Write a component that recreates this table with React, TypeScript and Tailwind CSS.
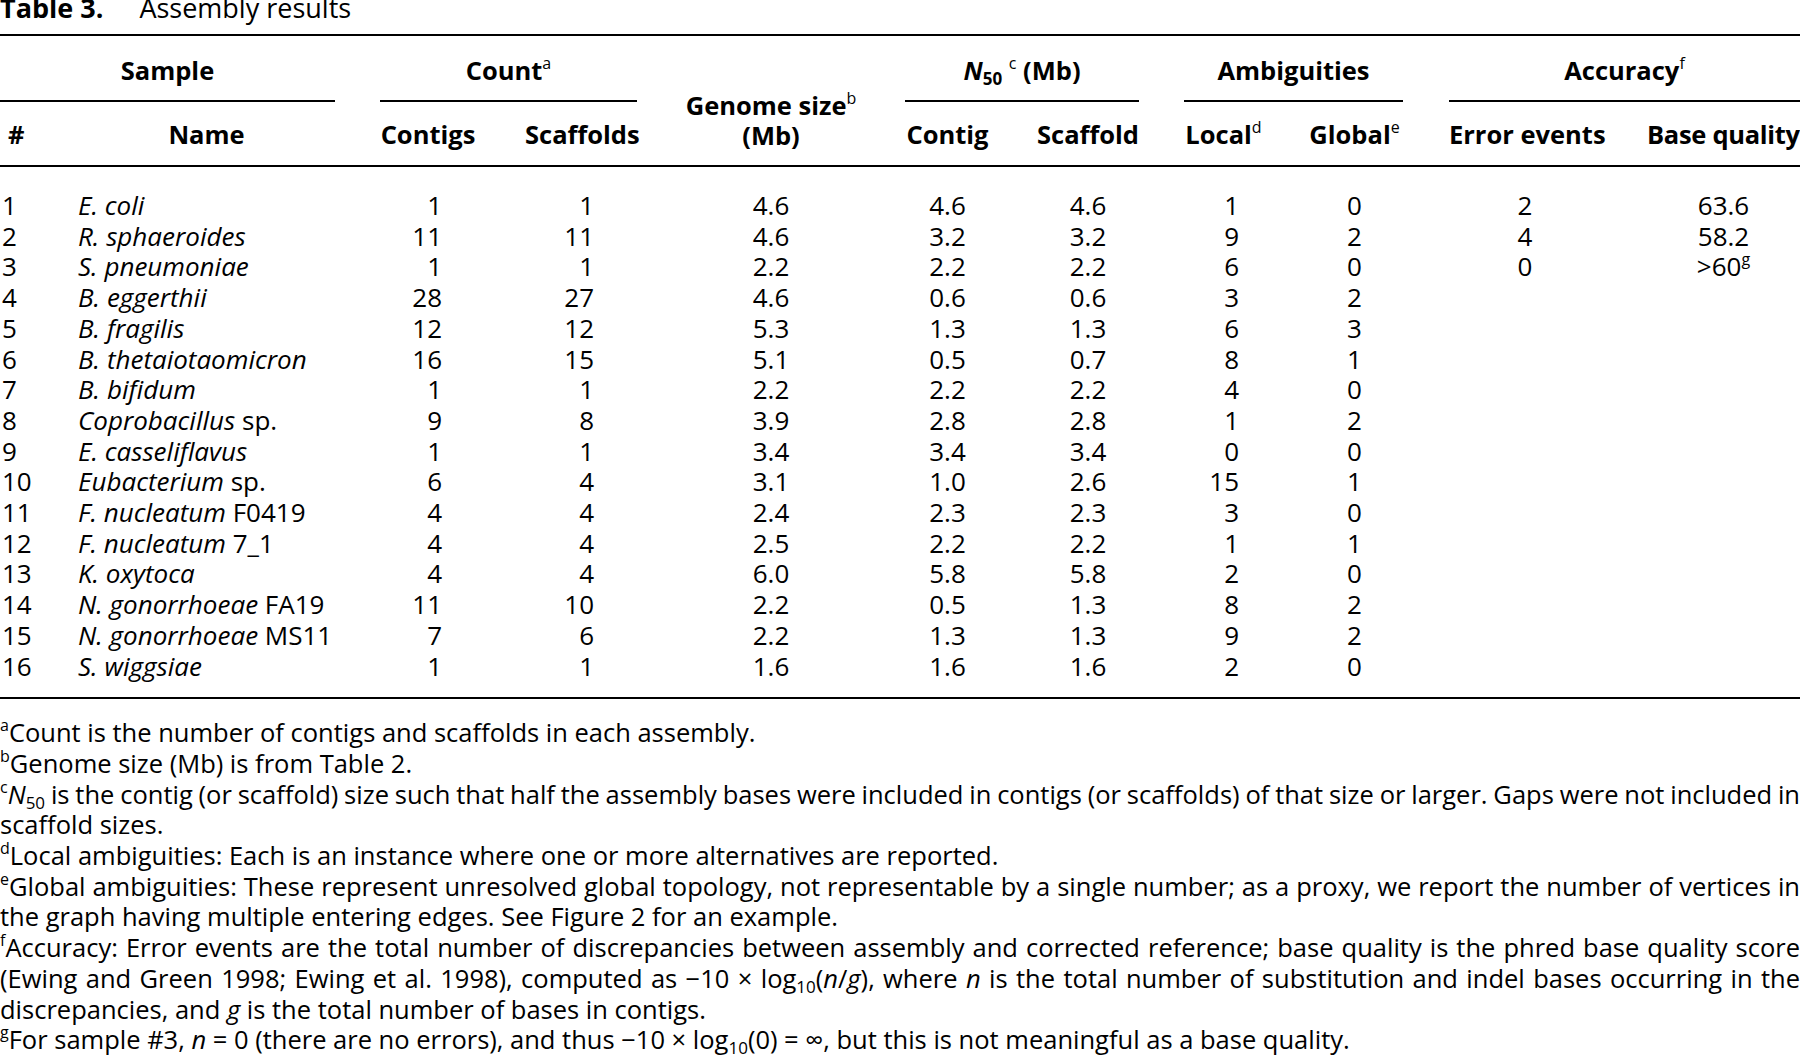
import type { ReactNode } from "react";

// 18 columns: data columns with spacer columns between the header groups
const GRID =
  "grid grid-cols-[78px_257px_45px_96px_49px_112px_268px_85px_47px_102px_45px_79px_43px_97px_46px_152px_46px_153px]";

type Row = {
  n: number;
  italic: string;
  roman?: string;
  contigs: string;
  scaffolds: string;
  genome: string;
  n50Contig: string;
  n50Scaffold: string;
  local: string;
  global: string;
  errors?: string;
  quality?: ReactNode;
};

function Sup({ children }: { children: ReactNode }) {
  return (
    <sup className="relative top-[-11px] align-baseline text-[16px] font-normal leading-none">
      {children}
    </sup>
  );
}

function Sub({ children }: { children: ReactNode }) {
  return (
    <sub className="relative top-[5px] align-baseline text-[17px] leading-none">
      {children}
    </sub>
  );
}

const ROWS: Row[] = [
  { n: 1, italic: "E. coli", contigs: "1", scaffolds: "1", genome: "4.6", n50Contig: "4.6", n50Scaffold: "4.6", local: "1", global: "0", errors: "2", quality: "63.6" },
  { n: 2, italic: "R. sphaeroides", contigs: "11", scaffolds: "11", genome: "4.6", n50Contig: "3.2", n50Scaffold: "3.2", local: "9", global: "2", errors: "4", quality: "58.2" },
  {
    n: 3,
    italic: "S. pneumoniae",
    contigs: "1",
    scaffolds: "1",
    genome: "2.2",
    n50Contig: "2.2",
    n50Scaffold: "2.2",
    local: "6",
    global: "0",
    errors: "0",
    quality: (
      <>
        &gt;60<Sup>g</Sup>
      </>
    ),
  },
  { n: 4, italic: "B. eggerthii", contigs: "28", scaffolds: "27", genome: "4.6", n50Contig: "0.6", n50Scaffold: "0.6", local: "3", global: "2" },
  { n: 5, italic: "B. fragilis", contigs: "12", scaffolds: "12", genome: "5.3", n50Contig: "1.3", n50Scaffold: "1.3", local: "6", global: "3" },
  { n: 6, italic: "B. thetaiotaomicron", contigs: "16", scaffolds: "15", genome: "5.1", n50Contig: "0.5", n50Scaffold: "0.7", local: "8", global: "1" },
  { n: 7, italic: "B. bifidum", contigs: "1", scaffolds: "1", genome: "2.2", n50Contig: "2.2", n50Scaffold: "2.2", local: "4", global: "0" },
  { n: 8, italic: "Coprobacillus", roman: " sp.", contigs: "9", scaffolds: "8", genome: "3.9", n50Contig: "2.8", n50Scaffold: "2.8", local: "1", global: "2" },
  { n: 9, italic: "E. casseliflavus", contigs: "1", scaffolds: "1", genome: "3.4", n50Contig: "3.4", n50Scaffold: "3.4", local: "0", global: "0" },
  { n: 10, italic: "Eubacterium", roman: " sp.", contigs: "6", scaffolds: "4", genome: "3.1", n50Contig: "1.0", n50Scaffold: "2.6", local: "15", global: "1" },
  { n: 11, italic: "F. nucleatum", roman: " F0419", contigs: "4", scaffolds: "4", genome: "2.4", n50Contig: "2.3", n50Scaffold: "2.3", local: "3", global: "0" },
  { n: 12, italic: "F. nucleatum", roman: " 7_1", contigs: "4", scaffolds: "4", genome: "2.5", n50Contig: "2.2", n50Scaffold: "2.2", local: "1", global: "1" },
  { n: 13, italic: "K. oxytoca", contigs: "4", scaffolds: "4", genome: "6.0", n50Contig: "5.8", n50Scaffold: "5.8", local: "2", global: "0" },
  { n: 14, italic: "N. gonorrhoeae", roman: " FA19", contigs: "11", scaffolds: "10", genome: "2.2", n50Contig: "0.5", n50Scaffold: "1.3", local: "8", global: "2" },
  { n: 15, italic: "N. gonorrhoeae", roman: " MS11", contigs: "7", scaffolds: "6", genome: "2.2", n50Contig: "1.3", n50Scaffold: "1.3", local: "9", global: "2" },
  { n: 16, italic: "S. wiggsiae", contigs: "1", scaffolds: "1", genome: "1.6", n50Contig: "1.6", n50Scaffold: "1.6", local: "2", global: "0" },
];

function TableHeader() {
  return (
    <div
      className={`${GRID} grid-rows-[64px_2px_63px] border-y-2 border-black text-[25.5px] font-bold leading-[30px]`}
    >
      <div className="col-start-1 col-span-2 row-start-1 pt-[19px] text-center">Sample</div>
      <div className="col-start-4 col-span-3 row-start-1 pt-[19px] text-center">
        Count<Sup>a</Sup>
      </div>
      <div className="col-start-7 row-start-1 row-span-3 pt-[54px] text-center">
        Genome size<Sup>b</Sup>
        <br />
        (Mb)
      </div>
      <div className="col-start-8 col-span-3 row-start-1 pt-[19px] text-center">
        <i>N</i>
        <Sub>50</Sub> <Sup>c</Sup> (Mb)
      </div>
      <div className="col-start-12 col-span-3 row-start-1 pt-[19px] text-center">Ambiguities</div>
      <div className="col-start-16 col-span-3 row-start-1 pt-[19px] text-center">
        Accuracy<Sup>f</Sup>
      </div>

      <div className="col-start-1 col-span-2 row-start-2 bg-black" />
      <div className="col-start-4 col-span-3 row-start-2 bg-black" />
      <div className="col-start-8 col-span-3 row-start-2 bg-black" />
      <div className="col-start-12 col-span-3 row-start-2 bg-black" />
      <div className="col-start-16 col-span-3 row-start-2 bg-black" />

      <div className="col-start-1 row-start-3 pl-[8px] pt-[17px]">#</div>
      <div className="col-start-2 row-start-3 pt-[17px] text-center">Name</div>
      <div className="col-start-4 row-start-3 pt-[17px] text-center">Contigs</div>
      <div className="col-start-6 row-start-3 pt-[17px] text-center">Scaffolds</div>
      <div className="col-start-8 row-start-3 pt-[17px] text-center">Contig</div>
      <div className="col-start-10 row-start-3 pt-[17px] text-center">Scaffold</div>
      <div className="col-start-12 row-start-3 pt-[17px] text-center">
        Local<Sup>d</Sup>
      </div>
      <div className="col-start-14 row-start-3 pt-[17px] text-center">
        Global<Sup>e</Sup>
      </div>
      <div className="col-start-16 row-start-3 whitespace-nowrap pt-[17px] text-center">Error events</div>
      <div className="col-start-18 row-start-3 whitespace-nowrap pt-[17px] tracking-[-0.3px]">Base quality</div>
    </div>
  );
}

function TableBody() {
  return (
    <div className="border-b-2 border-black pb-[16px] pt-[23px] leading-[30.7px]">
      {ROWS.map((r) => (
        <div key={r.n} className={GRID}>
          <div className="pl-[2px]">{r.n}</div>
          <div className="whitespace-nowrap">
            <i>{r.italic}</i>
            {r.roman}
          </div>
          <div />
          <div className="pr-[34px] text-right">{r.contigs}</div>
          <div />
          <div className="pr-[43px] text-right">{r.scaffolds}</div>
          <div className="text-center">{r.genome}</div>
          <div className="text-center">{r.n50Contig}</div>
          <div />
          <div className="text-center">{r.n50Scaffold}</div>
          <div />
          <div className="pr-[24px] text-right">{r.local}</div>
          <div />
          <div className="text-center">{r.global}</div>
          <div />
          <div className="text-center">{r.errors}</div>
          <div />
          <div className="text-center">{r.quality}</div>
        </div>
      ))}
    </div>
  );
}

// full lines are stretched edge to edge, last lines of a note stay ragged
function Line({ children, full }: { children: ReactNode; full?: boolean }) {
  return (
    <div
      className={
        full
          ? "whitespace-nowrap text-justify [word-spacing:-4px] [text-align-last:justify]"
          : "whitespace-nowrap"
      }
    >
      {children}
    </div>
  );
}

function Footnotes() {
  return (
    <div className="pt-[18px] text-[25.5px] leading-[30.7px]">
      <Line>
        <Sup>a</Sup>Count is the number of contigs and scaffolds in each assembly.
      </Line>
      <Line>
        <Sup>b</Sup>Genome size (Mb) is from Table 2.
      </Line>
      <Line full>
        <Sup>c</Sup>
        <i>N</i>
        <Sub>50</Sub> is the contig (or scaffold) size such that half the assembly bases were included in contigs (or
        scaffolds) of that size or larger. Gaps were not included in
      </Line>
      <Line>scaffold sizes.</Line>
      <Line>
        <Sup>d</Sup>Local ambiguities: Each is an instance where one or more alternatives are reported.
      </Line>
      <Line full>
        <Sup>e</Sup>Global ambiguities: These represent unresolved global topology, not representable by a single
        number; as a proxy, we report the number of vertices in
      </Line>
      <Line>the graph having multiple entering edges. See Figure 2 for an example.</Line>
      <Line full>
        <Sup>f</Sup>Accuracy: Error events are the total number of discrepancies between assembly and corrected
        reference; base quality is the phred base quality score
      </Line>
      <Line full>
        (Ewing and Green 1998; Ewing et al. 1998), computed as −10 × log<Sub>10</Sub>(<i>n</i>/<i>g</i>), where{" "}
        <i>n</i> is the total number of substitution and indel bases occurring in the
      </Line>
      <Line>
        discrepancies, and <i>g</i> is the total number of bases in contigs.
      </Line>
      <Line>
        <Sup>g</Sup>For sample #3, <i>n</i> = 0 (there are no errors), and thus −10 × log<Sub>10</Sub>(0) = ∞, but this
        is not meaningful as a base quality.
      </Line>
    </div>
  );
}

export default function App() {
  return (
    <div className="h-[1057px] w-[1800px] overflow-hidden bg-white font-['Open_Sans',sans-serif] text-[26px] text-black">
      <div className="-mt-[7px] mb-[11px] text-[27px] leading-[30px]">
        <span className="font-bold">Table 3.</span>
        <span className="ml-[36px]">Assembly results</span>
      </div>
      <TableHeader />
      <TableBody />
      <Footnotes />
    </div>
  );
}
